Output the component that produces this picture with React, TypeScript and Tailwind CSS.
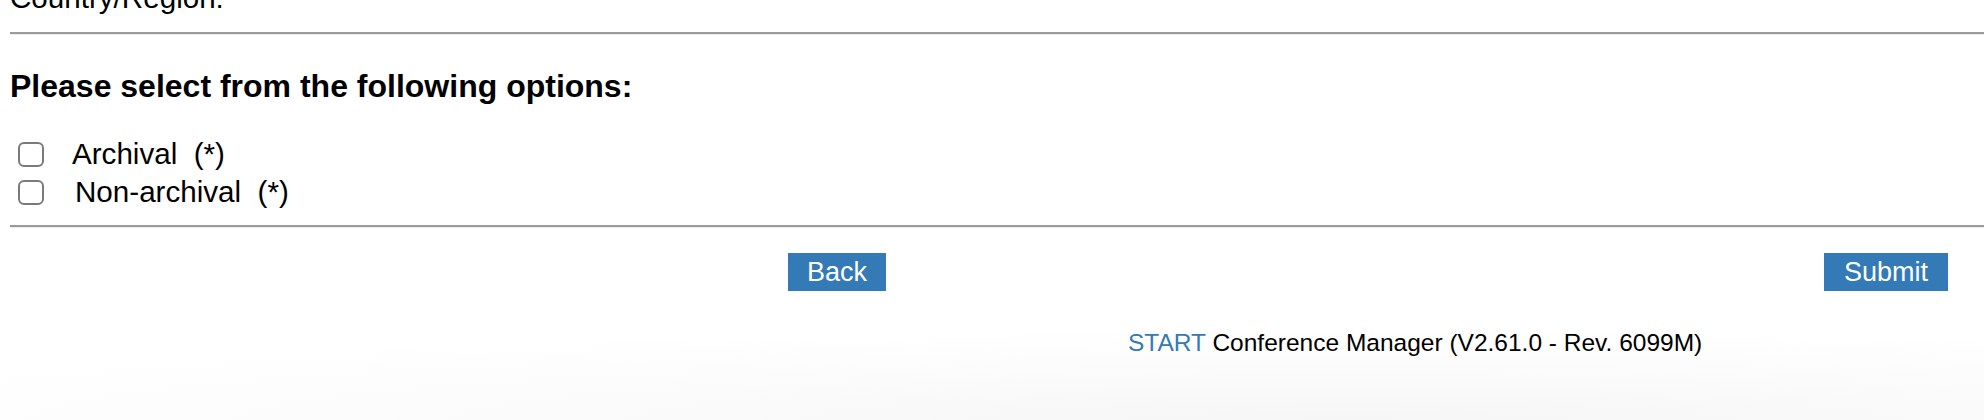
import { useState } from "react";

const options = [
  { id: "archival", label: "Archival", indent: "ml-[28px]" },
  { id: "non-archival", label: "Non-archival", indent: "ml-[31px]" },
];

export default function App() {
  const [checked, setChecked] = useState<Record<string, boolean>>({});

  return (
    <div className="h-[420px] overflow-hidden bg-[radial-gradient(ellipse_85%_22%_at_68%_100%,#f6f6f6_0%,#fbfbfb_50%,#ffffff_100%)] font-['Liberation_Sans',Arial,sans-serif] text-black">
      <div className="pl-[10px]">
        <div className="-mt-[19px] text-[29.6px] leading-[33px]">Country/Region:</div>

        <hr className="mt-[18px] border-t-2 border-b border-t-[#9a9a9a] border-b-[#ececec]" />

        <h3 className="mt-[33px] text-[32px] font-bold leading-[37px]">Please select from the following options:</h3>

        <div className="mt-[33px] flex flex-col gap-[6px] pl-[8px]">
          {options.map((opt) => (
            <label key={opt.id} className="flex items-center text-[29.6px] leading-[32px]">
              <span
                onClick={() => setChecked({ ...checked, [opt.id]: !checked[opt.id] })}
                className="h-[25px] w-[26px] shrink-0 rounded-[6px] border-2 border-[#7a7a7a] bg-white"
              />
              <span className={opt.indent}>
                {opt.label}
                {"\u00a0 (*)"}
              </span>
            </label>
          ))}
        </div>

        <hr className="mt-[17px] border-t-2 border-b border-t-[#9a9a9a] border-b-[#ececec]" />

        <div className="mt-[25px] flex items-start pr-[36px]">
          <button className="ml-[778px] h-[38px] bg-[#337ab7] px-[19px] text-[27px] leading-[38px] text-white">Back</button>
          <button className="ml-auto h-[38px] bg-[#337ab7] px-[20px] text-[27px] leading-[38px] text-white">Submit</button>
        </div>

        <div className="mt-[38px] pl-[1118px] text-[24.5px] leading-[28px]">
          <span className="text-[#337ab7]">START</span> Conference Manager (V2.61.0 - Rev. 6099M)
        </div>
      </div>
    </div>
  );
}
